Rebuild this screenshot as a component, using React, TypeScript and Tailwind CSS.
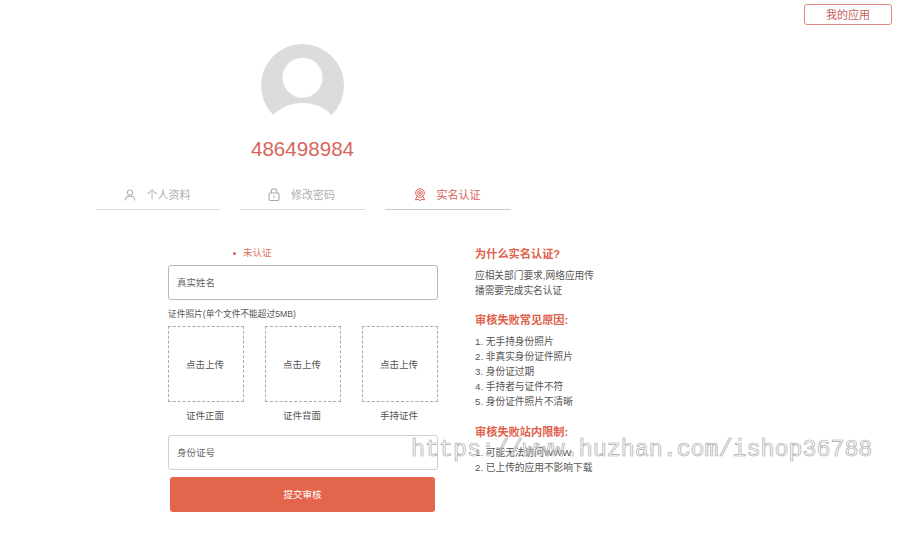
const font = "font-['Liberation_Sans','Noto_Sans_CJK_SC',sans-serif]";

function UserIcon() {
  return (
    <svg width="12" height="12" viewBox="0 0 12 12" fill="none" stroke="#b5b5b5" strokeWidth="1.1">
      <circle cx="6" cy="3.6" r="2.6" />
      <path d="M1 11.5c.4-2.8 2.3-4.400 5-4.400s4.600 1.600 5 4.400" />
    </svg>
  );
}

function LockIcon() {
  return (
    <svg width="12" height="13" viewBox="0 0 12 13" fill="none" stroke="#a8a8a8" strokeWidth="1.1">
      <rect x="1" y="5" width="10" height="7.500" rx="1.500" />
      <path d="M3.200 5V3.300C3.200 1.800 4.400.8 6 .8s2.800 1 2.800 2.500V5M6 7.500v2.500" />
    </svg>
  );
}

function CertIcon() {
  return (
    <svg width="12" height="13" viewBox="0 0 12 13" fill="none" stroke="#d9605a" strokeWidth="1">
      <circle cx="6" cy="5" r="4.300" />
      <circle cx="6" cy="5" r="2.300" />
      <circle cx="6" cy="5" r="0.600" />
      <path d="M2.800 8.500 1.500 12l2.500-.7L6 12.500l2-1.200 2.500.7-1.300-3.500" />
    </svg>
  );
}

function Avatar() {
  return (
    <svg width="83" height="83" viewBox="0 0 83 83">
      <circle cx="41.500" cy="41.500" r="41.500" fill="#dcdcdc" />
      <circle cx="41.500" cy="33.700" r="20" fill="#fff" />
      <ellipse cx="41.500" cy="90" rx="37" ry="31" fill="#fff" />
    </svg>
  );
}

function Tab({ icon, label, active, width }: { icon: React.ReactNode; label: string; active?: boolean; width: string }) {
  return (
    <div className={`flex h-[34px] items-end justify-center gap-[11px] border-b pb-[8px] pr-[2px] ${width} ${active ? "border-[#cfc6c0] text-[#d9605a]" : "border-[#dddddd] text-[#b0b0b0]"}`}>
      {icon}
      <span className="text-[11px] leading-[12px]">{label}</span>
    </div>
  );
}

function Upload({ caption }: { caption: string }) {
  return (
    <div className="flex w-[76px] flex-col items-center">
      <div className="flex h-[76px] w-[76px] items-center justify-center border border-dashed border-[#aaaaaa] pr-[2px] pt-[2px] text-[9.500px] text-[#555555]">
        点击上传
      </div>
      <span className="mt-[7px] pr-[2px] text-[9.500px] leading-[13px] text-[#555555]">{caption}</span>
    </div>
  );
}

function Field({ label, border }: { label: string; border: string }) {
  return (
    <div className={`flex h-[35px] w-[270px] items-center rounded-[3px] border bg-white pl-[8px] pt-[2px] text-[9.500px] text-[#666666] ${border}`}>
      {label}
    </div>
  );
}

function Heading({ children, className }: { children: React.ReactNode; className: string }) {
  return <h3 className={`text-[11.200px] font-bold leading-[16px] text-[#e0604a] ${className}`}>{children}</h3>;
}

export default function App() {
  return (
    <div className={`relative h-[558px] w-[900px] overflow-hidden bg-white ${font}`}>
      <header className="flex justify-end pr-[8px] pt-[4px]">
        <button className="h-[21px] w-[88px] rounded-[3px] border border-[#e58a80] pt-[2px] text-[11px] text-[#c8605a]">我的应用</button>
      </header>

      <div className="mt-[19px] flex w-[605px] flex-col items-center">
        <Avatar />
        <div className="mt-[9px] text-[20.600px] leading-[26px] text-[#d9645c]">486498984</div>
      </div>

      <nav className="mt-[14px] flex gap-[20px] pl-[96px]">
        <Tab icon={<UserIcon />} label="个人资料" width="w-[124px]" />
        <Tab icon={<LockIcon />} label="修改密码" width="w-[125px]" />
        <Tab icon={<CertIcon />} label="实名认证" width="w-[126px]" active />
      </nav>

      <main className="mt-[36px] flex gap-[37px] pl-[168px]">
        <section className="flex w-[270px] flex-col">
          <div className="flex h-[14px] items-center pl-[65px] text-[9.500px] text-[#d9705c]">
            <span className="mr-[7px] h-[3px] w-[3px] rounded-full bg-[#d9605a]" />
            未认证
          </div>
          <div className="mt-[5px]">
            <Field label="真实姓名" border="border-[#b8b8b8]" />
          </div>
          <div className="mt-[8px] text-[8.700px] leading-[13px] text-[#555555]">证件照片(单个文件不能超过5MB)</div>
          <div className="mt-[5px] flex justify-between">
            <Upload caption="证件正面" />
            <Upload caption="证件背面" />
            <Upload caption="手持证件" />
          </div>
          <div className="mt-[13px]">
            <Field label="身份证号" border="border-[#d0d0d0]" />
          </div>
          <button className="ml-[2px] mt-[7px] h-[35px] w-[265px] rounded-[3px] bg-[#e3654c] pt-[2px] text-[9.500px] text-white">提交审核</button>
        </section>

        <aside className="text-[9.700px] leading-[15px] text-[#555555]">
          <Heading className="">为什么实名认证?</Heading>
          <p className="mt-[6px]">应相关部门要求,网络应用传</p>
          <p>播需要完成实名认证</p>
          <Heading className="mt-[14px]">审核失败常见原因:</Heading>
          <ol className="mt-[6px]">
            <li>1. 无手持身份照片</li>
            <li>2. 非真实身份证件照片</li>
            <li>3. 身份证过期</li>
            <li>4. 手持者与证件不符</li>
            <li>5. 身份证件照片不清晰</li>
          </ol>
          <Heading className="mt-[15px]">审核失败站内限制:</Heading>
          <ol className="mt-[5px]">
            <li>1. 可能无法访问WWW</li>
            <li>2. 已上传的应用不影响下载</li>
          </ol>
        </aside>
      </main>

      <div className="pointer-events-none absolute left-[411px] top-[435px] whitespace-nowrap font-['Liberation_Mono',monospace] text-[23.300px] leading-[30px] text-white/30 [-webkit-text-stroke:0.7px_#aaaaaa]">
        https://www.huzhan.com/ishop36788
      </div>
    </div>
  );
}
